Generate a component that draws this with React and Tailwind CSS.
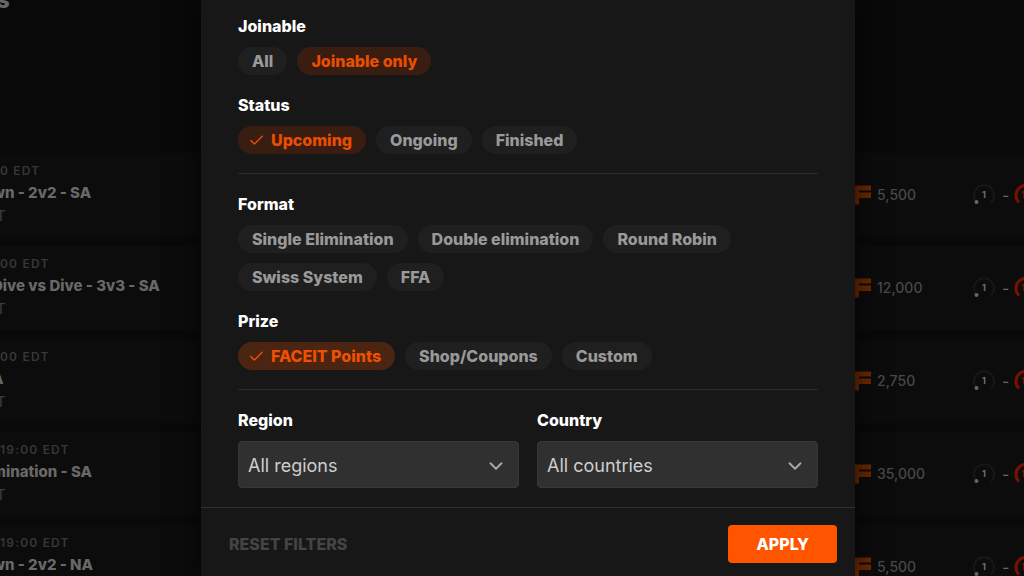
import React, { useState } from 'react';
import { Check, ChevronDown } from 'lucide-react';

const tournaments = [
  { time: '0 EDT', title: 'wn - 2v2 - SA', host: 'IT', prize: '5,500' },
  { time: '00 EDT', title: 'Dive vs Dive - 3v3 - SA', host: 'IT', prize: '12,000' },
  { time: '00 EDT', title: 'A', host: 'IT', prize: '2,750' },
  { time: '19:00 EDT', title: 'mination - SA', host: 'IT', prize: '35,000' },
  { time: '19:00 EDT', title: 'wn - 2v2 - NA', host: 'IT', prize: '5,500' },
];

const PointsIcon = () => (
  <svg width="17" height="20" viewBox="0 0 17 20" fill="#702900" className="shrink-0" aria-hidden="true">
    <path d="M0 0.5h17v5H5v2h12v5.5H5v6.5H0z" />
  </svg>
);

const SkillLevel = ({ level, color, dot }) => (
  <svg width="24" height="24" viewBox="0 0 24 24" fill="none" className="shrink-0">
    <path d="M5 19.5A10 10 0 1 1 19 19.5" stroke={color} strokeWidth={dot ? 2 : 3} />
    {dot && <circle cx="4.5" cy="19" r="2" fill="#666" />}
    <text x="12" y="15" textAnchor="middle" fontSize="9" fontWeight="700" fill={dot ? '#707070' : color}>
      {level}
    </text>
  </svg>
);

const TournamentRow = ({ item }) => (
  <li className="flex h-[84px] items-center justify-between bg-[#0c0c0c]">
    <div className="whitespace-nowrap">
      <p className="text-xs leading-4 font-semibold tracking-widest text-[#373737]">{item.time}</p>
      <h3 className="-ml-2 pt-0.5 text-[15px] leading-6 font-extrabold text-[#686868]">{item.title}</h3>
      <p className="-ml-2 text-[15px] leading-[22px] text-[#3d3d3d]">{item.host}</p>
    </div>
    <div className="flex w-[170px] shrink-0 items-center">
      <PointsIcon />
      <span className="ml-1.5 w-[95px] shrink-0 text-sm leading-5 font-medium text-[#484848]">{item.prize}</span>
      <SkillLevel level="1" color="#171717" dot />
      <span className="ml-1.5 w-3 shrink-0 text-[#666]">-</span>
      <SkillLevel level="10" color="#7a1100" />
    </div>
  </li>
);

const Chip = ({ label, selected, checked, hovered, onClick }) => {
  let colors = 'bg-[#1f1f1f] text-[#999]';
  if (selected) colors = hovered ? 'bg-[#4c2412] text-[#f05000]' : 'bg-[#3a1d11] text-[#ea4e00]';

  return (
    <button
      type="button"
      aria-pressed={selected}
      onClick={onClick}
      className={`flex h-7 items-center rounded-full text-base leading-5 font-extrabold whitespace-nowrap ${colors} ${
        checked ? 'gap-1.5 pr-3.5 pl-2.5' : 'px-3.5'
      }`}
    >
      {checked && <Check size={17} strokeWidth={2} />}
      {label}
    </button>
  );
};

const ChipGroup = ({ title, options, initial, showCheck, hovered }) => {
  const [value, setValue] = useState(initial);

  return (
    <section>
      <h2 className="mb-[11px] text-base leading-5 font-extrabold text-white">{title}</h2>
      <div className="flex flex-wrap gap-2.5">
        {options.map((option) => (
          <Chip
            key={option}
            label={option}
            selected={value === option}
            checked={showCheck && value === option}
            hovered={hovered === option}
            onClick={() => setValue(option)}
          />
        ))}
      </div>
    </section>
  );
};

const SelectField = ({ id, label, options }) => (
  <div className="flex-1">
    <label htmlFor={id} className="mb-[11px] block text-base leading-5 font-extrabold text-white">
      {label}
    </label>
    <div className="relative">
      <select
        id={id}
        className="h-[47px] w-full appearance-none rounded border border-[#383838] bg-[#303030] px-[9px] pt-0.5 text-lg text-[#cecece]"
      >
        {options.map((option) => (
          <option key={option}>{option}</option>
        ))}
      </select>
      <ChevronDown size={22} className="pointer-events-none absolute top-3.5 right-3 text-[#aaa]" />
    </div>
  </div>
);

const FilterDialog = () => (
  <div
    role="dialog"
    aria-label="Filters"
    className="flex w-[654px] flex-col bg-[#171717] shadow-[0_0_24px_4px_rgba(0,0,0,0.6)]"
  >
    <div className="px-[37px] pt-4 pb-[19px]">
      <div className="flex flex-col gap-5 border-b border-[#2b2b2b] pb-[19px]">
        <ChipGroup title="Joinable" options={['All', 'Joinable only']} initial="Joinable only" />
        <ChipGroup title="Status" options={['Upcoming', 'Ongoing', 'Finished']} initial="Upcoming" showCheck />
      </div>
      <div className="flex flex-col gap-5 border-b border-[#2b2b2b] pt-5 pb-[19px]">
        <ChipGroup
          title="Format"
          options={['Single Elimination', 'Double elimination', 'Round Robin', 'Swiss System', 'FFA']}
          showCheck
        />
        <ChipGroup
          title="Prize"
          options={['FACEIT Points', 'Shop/Coupons', 'Custom']}
          initial="FACEIT Points"
          hovered="FACEIT Points"
          showCheck
        />
      </div>
      <div className="flex gap-[18px] pt-5">
        <SelectField id="region" label="Region" options={['All regions']} />
        <SelectField id="country" label="Country" options={['All countries']} />
      </div>
    </div>
    <div className="flex flex-1 items-start justify-between border-t border-[#2f2f2f] pt-[17px] pr-[18px] pl-7">
      <button type="button" className="h-[38px] text-base font-extrabold text-[#444]">
        RESET FILTERS
      </button>
      <button type="button" className="h-[38px] rounded bg-[#ff5500] px-7 text-base font-extrabold text-white">
        APPLY
      </button>
    </div>
  </div>
);

const App = () => {
  return (
    <div className="relative h-screen overflow-hidden bg-[#090909] font-['Inter',sans-serif]">
      <main>
        <h1 className="-mt-4 -ml-1 h-[169px] text-2xl leading-8 font-extrabold text-[#666]">s</h1>
        <ul className="flex flex-col gap-[9px]">
          {tournaments.map((item, index) => (
            <TournamentRow key={index} item={item} />
          ))}
        </ul>
      </main>
      <div className="absolute inset-0 flex justify-center pl-8">
        <FilterDialog />
      </div>
    </div>
  );
};

export default App;
